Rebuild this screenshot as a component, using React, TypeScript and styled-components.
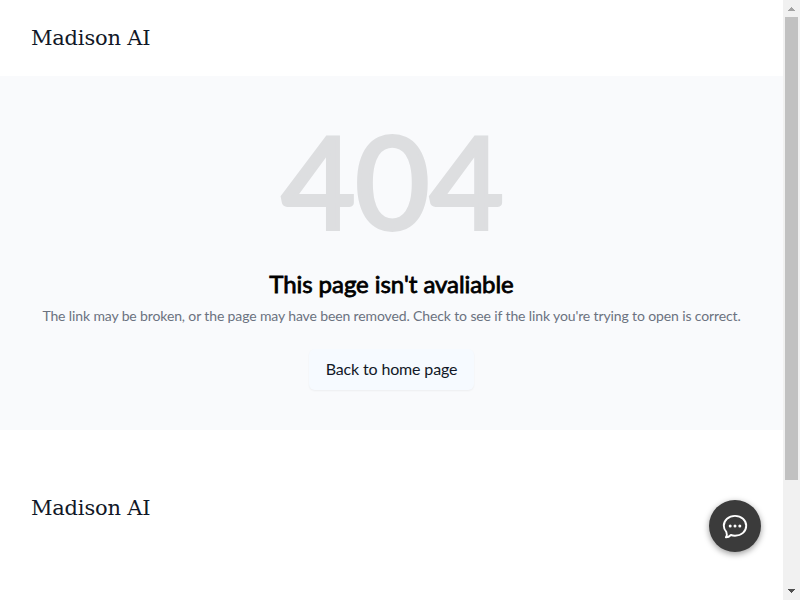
import styled, { createGlobalStyle } from "styled-components"

const GlobalStyle = createGlobalStyle`
  * {
    box-sizing: border-box;
  }
  body {
    margin: 0;
    overflow: hidden;
    background: #ffffff;
    font-family: Lato, sans-serif;
  }
`

const Window = styled.div`
  display: flex;
  height: 100vh;
  overflow: hidden;
`

const Page = styled.div`
  flex: 1;
  min-width: 0;
  display: flex;
  flex-direction: column;
`

const Header = styled.header`
  height: 76px;
  display: flex;
  align-items: center;
  padding: 0 31px;
`

const Footer = styled.footer`
  display: flex;
  padding: 62px 31px;
`

const Brand = styled.a`
  font-family: "DejaVu Serif", serif;
  font-size: 21px;
  line-height: 32px;
  letter-spacing: -0.2px;
  color: #111827;
  white-space: nowrap;
`

const Main = styled.main`
  height: 354px;
  padding-top: 40px;
  display: flex;
  flex-direction: column;
  align-items: center;
  background: #f9fafc;
`

const Code = styled.h1`
  margin: 0;
  padding-left: 2px;
  font-size: 128px;
  line-height: 128px;
  font-weight: 400;
  color: #dddee0;
  -webkit-text-stroke: 4px #dddee0;
`

const Title = styled.h2`
  margin: 24px 0 0;
  font-size: 24px;
  line-height: 32px;
  letter-spacing: -0.06px;
  font-weight: 400;
  color: #000000;
  -webkit-text-stroke: 0.8px #000000;
`

const Description = styled.p`
  margin: 6px 0 0;
  font-size: 14px;
  line-height: 20px;
  letter-spacing: -0.125px;
  color: #6b7280;
  white-space: nowrap;
`

const HomeButton = styled.button`
  margin-top: 23px;
  height: 41px;
  padding: 0 17px 2px;
  border: 0;
  border-radius: 6px;
  background: #f6faff;
  box-shadow: 0 1px 2px rgba(0, 0, 0, 0.05);
  font-family: inherit;
  font-size: 16px;
  line-height: 24px;
  letter-spacing: -0.15px;
  color: #111827;
  cursor: pointer;
`

const ChatButton = styled.button`
  position: fixed;
  left: 709px;
  top: 500px;
  width: 52px;
  height: 52px;
  padding: 0;
  border: 0;
  border-radius: 50%;
  display: grid;
  place-items: center;
  background: #3b3b3b;
  box-shadow: 0 2px 6px rgba(0, 0, 0, 0.4);
  cursor: pointer;
`

const Scrollbar = styled.div`
  width: 17px;
  display: flex;
  flex-direction: column;
  align-items: center;
  background: #f1f1f1;
`

const ArrowBox = styled.div`
  width: 17px;
  height: 17px;
  display: grid;
  place-items: center;
`

const DownArrowBox = styled(ArrowBox)`
  padding-bottom: 2px;
`

const Thumb = styled.div`
  width: 13px;
  height: 463px;
  margin-bottom: auto;
  background: #c1c1c1;
`

const ChatIcon = () => (
  <svg width="26" height="26" viewBox="0 0 26 26" fill="none">
    <path
      d="M4.3 18.8C2.6 17.1 1.8 15 1.8 12.8C1.8 7.1 6.6 2.9 13 2.9C19.4 2.9 24.2 7.1 24.2 12.8C24.2 18.5 19.4 22.7 13 22.7C11.6 22.7 10.2 22.5 8.9 22C7.5 23.5 5.8 24.4 3.9 24.3C4.9 22.8 5.1 20.6 4.3 18.8Z"
      stroke="#ffffff"
      strokeWidth="1.9"
      strokeLinejoin="round"
    />
    <circle cx="8.2" cy="12.9" r="1.5" fill="#ffffff" />
    <circle cx="13" cy="12.9" r="1.5" fill="#ffffff" />
    <circle cx="17.8" cy="12.9" r="1.5" fill="#ffffff" />
  </svg>
)

const App = () => {
  return (
    <>
      <GlobalStyle />
      <Window>
        <Page>
          <Header>
            <Brand>Madison AI</Brand>
          </Header>
          <Main>
            <Code>404</Code>
            <Title>This page isn't avaliable</Title>
            <Description>
              The link may be broken, or the page may have been removed. Check
              to see if the link you're trying to open is correct.
            </Description>
            <HomeButton>Back to home page</HomeButton>
          </Main>
          <Footer>
            <Brand>Madison AI</Brand>
          </Footer>
        </Page>
        <Scrollbar>
          <ArrowBox>
            <svg width="7" height="4" shapeRendering="crispEdges">
              <path d="M3 0h1v1h1v1h1v1h1v1H0V3h1V2h1V1h1z" fill="#a3a3a3" />
            </svg>
          </ArrowBox>
          <Thumb />
          <DownArrowBox>
            <svg width="7" height="4" shapeRendering="crispEdges">
              <path d="M0 0h7v1H6v1H5v1H4v1H3V3H2V2H1V1H0z" fill="#505050" />
            </svg>
          </DownArrowBox>
        </Scrollbar>
      </Window>
      <ChatButton aria-label="Open chat">
        <ChatIcon />
      </ChatButton>
    </>
  )
}

export default App
